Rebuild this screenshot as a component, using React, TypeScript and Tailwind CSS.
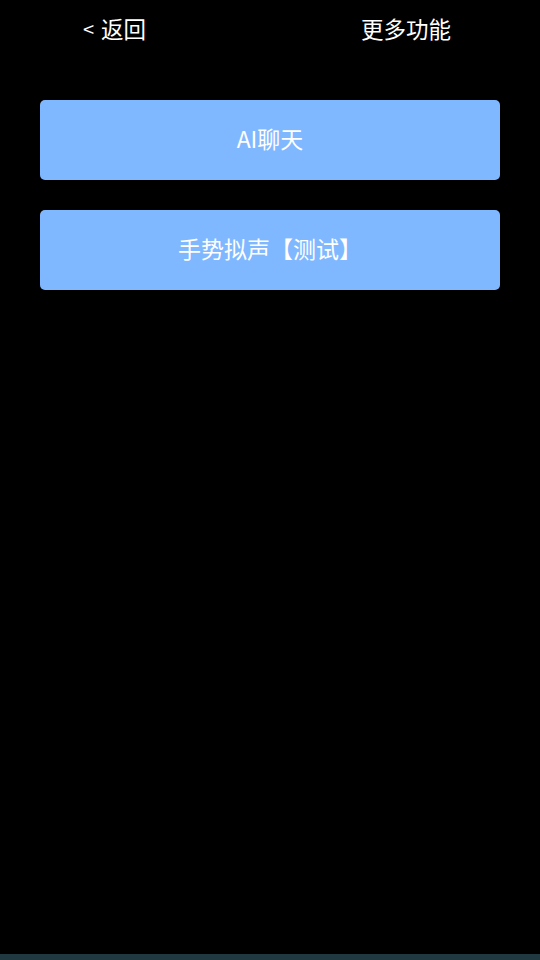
export default function App() {
  const font = { fontFamily: '"Noto Sans CJK SC", "Noto Sans", sans-serif' };
  return (
    <div className="relative flex h-[960px] w-[540px] flex-col bg-black text-white" style={font}>
      <header className="flex h-[60px] items-center justify-between pb-[3px] pl-[83px] pr-[89px] text-[22.5px] leading-none">
        <button className="flex items-center gap-[7px]">
          <span className="text-[20px]">&lt;</span>
          <span>返回</span>
        </button>
        <span>更多功能</span>
      </header>
      <div className="mt-[40px] flex flex-col gap-[30px] px-[40px]">
        <button className="flex h-[80px] items-center justify-center rounded-[5px] bg-[#80b8ff] pb-[3px] text-[23px] leading-none text-white">
          AI聊天
        </button>
        <button className="flex h-[80px] items-center justify-center rounded-[5px] bg-[#80b8ff] pb-[3px] text-[23px] leading-none text-white">
          手势拟声【测试】
        </button>
      </div>
      <div className="mt-auto h-[6px] bg-[#203840]" />
    </div>
  );
}
